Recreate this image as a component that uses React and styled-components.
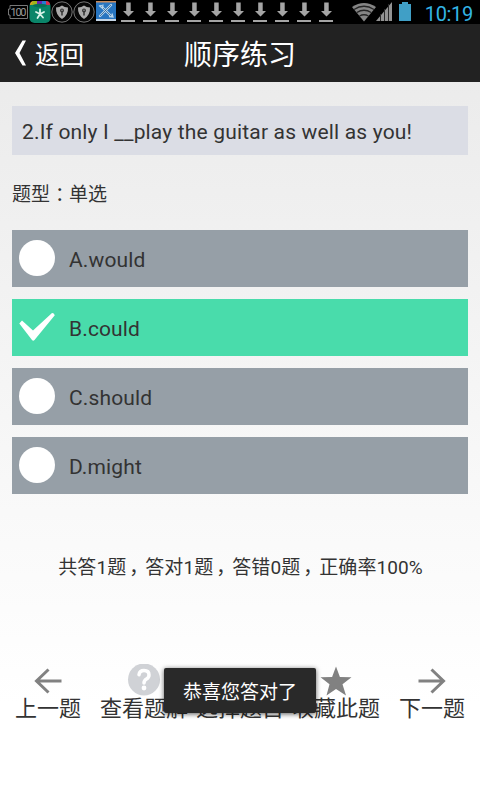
import React, { useState } from 'react'
import styled, { createGlobalStyle } from 'styled-components'

const GlobalStyle = createGlobalStyle`
  * {
    box-sizing: border-box;
  }

  body {
    margin: 0;
    background: #fff;
    font-family: Roboto, "Noto Sans CJK SC", sans-serif;
    color: #333;
  }
`

const Screen = styled.div`
  position: relative;
  display: flex;
  flex-direction: column;
  width: 480px;
  height: 800px;
  overflow: hidden;
  background: linear-gradient(#e9e9e9, #fff 88%);
`

const StatusBar = styled.div`
  display: flex;
  align-items: center;
  height: 24px;
  padding: 0 7px;
  background: #000;
`

const StatusIcon = styled.svg`
  display: block;
  flex: none;
  width: ${props => props.$width || 22}px;
  height: 24px;
  margin-left: ${props => props.$gap || 0}px;
`

const Clock = styled.span`
  margin-left: auto;
  padding-top: 5px;
  font-size: 20px;
  line-height: 19px;
  letter-spacing: -0.3px;
  color: #33b5e5;
`

const Header = styled.header`
  display: grid;
  grid-template-columns: 120px 240px 120px;
  align-items: center;
  height: 58px;
  background: #222;
  color: #fff;
`

const BackButton = styled.button`
  display: flex;
  align-items: center;
  gap: 8px;
  padding: 0 0 0 14px;
  border: none;
  background: none;
  color: inherit;
  font-family: inherit;
  font-size: 24.5px;
  line-height: 30px;
  cursor: pointer;

  span {
    padding-top: 5px;
  }
`

const Title = styled.h1`
  margin: 0;
  padding-top: 6px;
  font-size: 28px;
  font-weight: 400;
  line-height: 34px;
  text-align: center;
`

const Content = styled.main`
  display: flex;
  flex-direction: column;
  padding: 24px 12px 0;
`

const Question = styled.div`
  height: 49px;
  padding: 2px 10px 0;
  background: #dbdde5;
  font-size: 21px;
  line-height: 49px;
  letter-spacing: 0.17px;
  white-space: nowrap;
`

const QuestionType = styled.div`
  height: 75px;
  font-size: 19px;
  line-height: 79px;
`

// full-width punctuation, moved to the middle of its cell
const Mark = styled.span`
  display: inline-block;
  width: 1em;
  text-indent: ${props => props.$indent || 0.16}em;
  white-space: nowrap;
`

const Options = styled.div`
  display: grid;
  gap: 12px;
`

const Option = styled.button`
  display: flex;
  align-items: center;
  gap: 14px;
  height: 57px;
  padding: 0 7px;
  border: none;
  background: ${props => (props.$selected ? '#49dcab' : '#969fa7')};
  color: #333;
  font-family: inherit;
  font-size: 21px;
  letter-spacing: 0.13px;
  cursor: pointer;

  span {
    padding-top: 2px;
  }
`

const OptionIcon = styled.svg`
  width: 36px;
  height: 36px;
  margin-bottom: 1px;
  fill: #fff;
`

const Summary = styled.p`
  margin: 57px 0 0;
  padding-left: 1px;
  font-size: 19px;
  line-height: 34px;
  letter-spacing: 0.08px;
  text-align: center;
  white-space: nowrap;
`

const BottomNav = styled.nav`
  display: grid;
  grid-template-columns: repeat(5, 96px);
  margin-top: 79px;
`

const NavItem = styled.div`
  display: flex;
  flex-direction: column;
  align-items: center;
  font-size: 22px;
  line-height: 22px;
  white-space: nowrap;
`

const NavIcon = styled.svg`
  width: 34px;
  height: 34px;
`

const Toast = styled.div`
  position: absolute;
  left: 164px;
  top: 668px;
  width: 152px;
  height: 45px;
  border-radius: 2px;
  background: #292929;
  box-shadow: 0 1px 5px rgba(0, 0, 0, 0.65);
  color: #fff;
  font-size: 19px;
  line-height: 49px;
  text-align: center;
`

const BatteryLevel = () => (
  <StatusIcon viewBox="0 0 22 24">
    <path d="M3 5.500H20.500V18.500H3V15H1.500V9H3Z" fill="none" stroke="#777" />
    <text x="3.500" y="16" fontSize="11" textLength="16" fill="#999">100</text>
  </StatusIcon>
)

const FlowerApp = () => (
  <StatusIcon viewBox="0 0 22 24">
    <rect x="0.500" y="1" width="21" height="22" rx="5" fill="#0a8569" />
    <path d="M1 5Q1 1 5 1V5Z" fill="#ef9b22" />
    <path d="M4 1H8V5H2Z" fill="#a1b51c" />
    <path d="M8 1H13V5H8Z" fill="#6b22b0" />
    <path d="M13 1H17V5H13Z" fill="#287bd0" />
    <path d="M17 1Q21 1 21 5H17Z" fill="#d92c4d" />
    <ellipse cx="11" cy="5.500" rx="7" ry="1.700" fill="#087058" />
    <path d="M11 13V9.500M11 14L15 12M11 14L14 17.500M11 14L8.500 18M11 14L7 12" stroke="#d9f3ea" strokeWidth="1.800" strokeLinecap="round" />
  </StatusIcon>
)

const Shield = () => (
  <StatusIcon viewBox="0 0 22 24">
    <circle cx="11" cy="12" r="10.200" fill="#080808" stroke="#777" />
    <path d="M11 5.500Q13.500 7.500 17 7.500Q17.500 15 11 19Q4.500 15 5 7.500Q8.500 7.500 11 5.500Z" fill="#aaa" />
    <circle cx="11" cy="10.500" r="2" fill="#333" />
    <path d="M11 10V15.500" stroke="#333" strokeWidth="1.500" />
    <circle cx="11" cy="10.300" r="0.700" fill="#aaa" />
  </StatusIcon>
)

const Tools = () => (
  <StatusIcon viewBox="0 0 22 24">
    <rect x="1" y="1" width="20" height="20" fill="#2875c0" />
    <rect x="1" y="1" width="20" height="1.500" fill="#c98a5a" />
    <rect x="1" y="19" width="20" height="2" fill="#c5d5e5" />
    <path d="M6 6L16 16M16 5L5 16" stroke="#b8d4ea" strokeWidth="2.400" strokeLinecap="round" />
    <path d="M6 6L16 16M16 5L5 16" stroke="#2a5f91" strokeWidth="0.800" />
    <path d="M4 5.500L7.500 8L8 4.500M14 16.500L18 17L17 13.500" fill="none" stroke="#b8d4ea" strokeWidth="1.300" />
  </StatusIcon>
)

const Download = () => (
  <StatusIcon viewBox="0 0 22 24">
    <path d="M9.200 2.500H13.700V11H17L11.500 16.500L6 11H9.200Z" fill="#a5a5a5" />
    <rect x="4" y="20" width="14" height="2" fill="#a5a5a5" />
  </StatusIcon>
)

const Wifi = () => (
  <StatusIcon viewBox="0 0 24 24" $width={24} $gap={15}>
    <path d="M0 7Q12 -1 24 7L12 21.500Z" fill="#858585" />
    <path d="M2 9.500Q12 3 22 9.500M4.800 12.500Q12 8 19.200 12.500M7.500 16Q12 13.500 16.500 16" fill="none" stroke="#252525" strokeWidth="1.300" />
  </StatusIcon>
)

const Signal = () => (
  <StatusIcon viewBox="0 0 17 24" $width={17}>
    <path d="M0 21L16 2V21Z" fill="#929292" />
    <path d="M4.500 14V21M8.500 9V21M12.500 4V21" stroke="#292929" />
  </StatusIcon>
)

const Battery = () => (
  <StatusIcon viewBox="0 0 12 24" $width={12} $gap={6}>
    <path d="M0 4H3V2H9V4H12V21H0Z" fill="#409fc6" />
  </StatusIcon>
)

const Circle = () => (
  <OptionIcon viewBox="0 0 36 36">
    <circle cx="18" cy="18" r="18" />
  </OptionIcon>
)

const Check = () => (
  <OptionIcon viewBox="0 0 36 36">
    <path d="M0.300 14.500L3 11.400L14 21.500L33 4Q34.800 3.800 35.800 6.200L15.500 31Q14.200 32.400 13 31Z" />
  </OptionIcon>
)

const Previous = () => (
  <NavIcon viewBox="0 0 34 34" fill="none" stroke="#818181" strokeWidth="3">
    <path d="M30.500 17H5.500M17.500 5.500L5.500 17L17.500 28.500" />
  </NavIcon>
)

const Next = () => (
  <NavIcon viewBox="0 0 34 34" fill="none" stroke="#818181" strokeWidth="3">
    <path d="M3.500 17H28.500M16.500 5.500L28.500 17L16.500 28.500" />
  </NavIcon>
)

const Help = () => (
  <NavIcon viewBox="0 0 34 34">
    <circle cx="17" cy="15.500" r="16" fill="#d0d2d6" />
    <path d="M12 10.800Q12.500 6.500 17 6.500Q22 6.500 22 11Q22 13.500 19.500 15Q17 16.500 17 19" fill="none" stroke="#fff" strokeWidth="3.500" strokeLinecap="round" />
    <circle cx="17" cy="24" r="2.400" fill="#fff" />
  </NavIcon>
)

const Star = () => (
  <NavIcon viewBox="0 0 34 34">
    <path d="M17 2.500L20.900 13L32.500 13.300L23.500 20.300L27 31.500L17 25L7.500 31.500L10.500 20.300L1.500 13.300L13.100 13Z" fill="#818181" />
  </NavIcon>
)

const options = ['A.would', 'B.could', 'C.should', 'D.might']

const navItems = [
  { label: '上一题', Icon: Previous },
  { label: '查看题解', Icon: Help },
  { label: '选择题目', Icon: NavIcon },
  { label: '收藏此题', Icon: Star },
  { label: '下一题', Icon: Next },
]

const App = () => {
  const [selected, setSelected] = useState(1)

  return (
    <Screen>
      <GlobalStyle />
      <StatusBar>
        <BatteryLevel />
        <FlowerApp />
        <Shield />
        <Shield />
        <Tools />
        {[...Array(10)].map((_, i) => <Download key={i} />)}
        <Wifi />
        <Signal />
        <Battery />
        <Clock>10:19</Clock>
      </StatusBar>
      <Header>
        <BackButton>
          <svg width="13" height="26" viewBox="0 0 13 26">
            <path d="M8.500 0.500H12L5.500 13L12 25.500H8.500L1 13Z" fill="#fff" />
          </svg>
          <span>返回</span>
        </BackButton>
        <Title>顺序练习</Title>
      </Header>
      <Content>
        <Question>2.If only I __play the guitar as well as you!</Question>
        <QuestionType>题型<Mark $indent={0.26}>：</Mark>单选</QuestionType>
        <Options>
          {options.map((option, i) => (
            <Option key={option} $selected={i === selected} onClick={() => setSelected(i)}>
              {i === selected ? <Check /> : <Circle />}
              <span>{option}</span>
            </Option>
          ))}
        </Options>
        <Summary>
          共答1题<Mark>，</Mark>答对1题<Mark>，</Mark>答错0题<Mark>，</Mark>正确率100%
        </Summary>
      </Content>
      <BottomNav>
        {navItems.map(({ label, Icon }) => (
          <NavItem key={label}>
            <Icon />
            {label}
          </NavItem>
        ))}
      </BottomNav>
      <Toast>恭喜您答对了</Toast>
    </Screen>
  )
}

export default App
